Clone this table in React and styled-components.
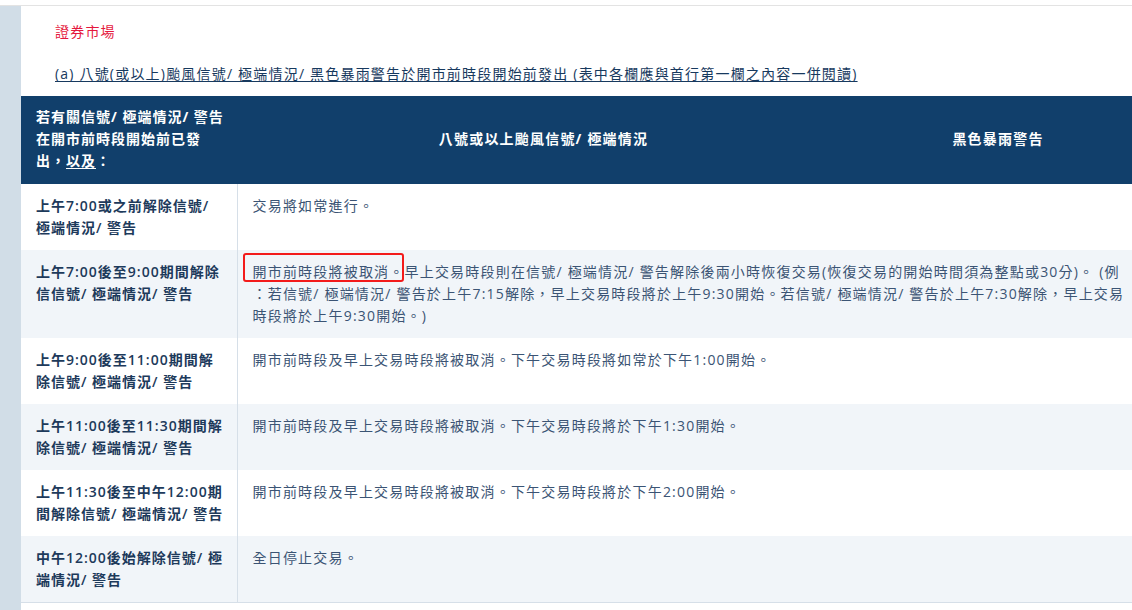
import React from 'react';
import styled, { createGlobalStyle } from 'styled-components';

const GlobalStyle = createGlobalStyle`
  * {
    margin: 0;
    padding: 0;
    box-sizing: border-box;
  }

  html, body {
    background: #ffffff;
    overflow: hidden;
    font-family: 'Open Sans', 'Noto Sans CJK TC', sans-serif;
    font-size: 14px;
    line-height: 22px;
    letter-spacing: 1.2px;
  }
`;

// Barra superior fina
const TopBar = styled.div`
  height: 6px;
  border-bottom: 1px solid #e3e3e3;
  width: 100%;
`;

const Layout = styled.div`
  display: flex;
  width: 1180px;
  min-height: 620px;
`;

// Faixa lateral cinza-azulada
const SideStrip = styled.aside`
  width: 21px;
  flex-shrink: 0;
  background-color: #d1dde7;
`;

const Content = styled.main`
  flex: 1;
  display: flex;
  flex-direction: column;
`;

const Intro = styled.div`
  padding: 15px 0 0 34px;
  display: flex;
  flex-direction: column;
  gap: 20px;
  margin-bottom: 11px;
`;

const SectionTitle = styled.h2`
  font-size: 14px;
  font-weight: 400;
  color: #e5173d;
  line-height: 22px;
`;

const SubTitle = styled.a`
  color: #17395e;
  text-decoration: underline;
  text-underline-offset: 2px;
  font-size: 14px;
`;

// Tabela
const Table = styled.table`
  width: 1125px;
  border-collapse: collapse;
  table-layout: fixed;
  border-bottom: 1px solid #d6dfe8;
`;

const Th = styled.th`
  background-color: #113f6b;
  color: #ffffff;
  font-weight: 700;
  padding: ${({ $left }) => ($left ? '10px 8px 12px 15px' : '10px 15px 12px')};
  letter-spacing: ${({ $left }) => ($left ? '1px' : '1.2px')};
  text-align: ${({ $left }) => ($left ? 'left' : 'center')};
  vertical-align: middle;
  width: ${({ $w }) => $w};
`;

const Row = styled.tr`
  background-color: ${({ $alt }) => ($alt ? '#f1f5f9' : '#ffffff')};
`;

const LabelCell = styled.td`
  padding: 11px 8px 11px 15px;
  vertical-align: top;
  color: #1d3a5b;
  font-weight: 600;
  letter-spacing: 1px;
  border-right: 1px solid #d6dfe8;
`;

const TextCell = styled.td`
  position: relative;
  padding: 11px 15px;
  vertical-align: top;
  color: #3b5474;
  line-break: anywhere;
`;

// Marca vermelha sobre o texto
const Highlight = styled.span`
  position: absolute;
  left: 5px;
  top: 3px;
  width: 161px;
  height: 29px;
  border: 2px solid #f31b1b;
  border-radius: 3px;
  pointer-events: none;
`;

const Under = styled.u`
  text-underline-offset: 2px;
`;

const rows = [
  {
    label: '上午7:00或之前解除信號/ 極端情況/ 警告',
    text: '交易將如常進行。',
  },
  {
    label: '上午7:00後至9:00期間解除信信號/ 極端情況/ 警告',
    text: '開市前時段將被取消。早上交易時段則在信號/ 極端情況/ 警告解除後兩小時恢復交易(恢復交易的開始時間須為整點或30分)。 (例：若信號/ 極端情況/ 警告於上午7:15解除，早上交易時段將於上午9:30開始。若信號/ 極端情況/ 警告於上午7:30解除，早上交易時段將於上午9:30開始。)',
    marked: true,
  },
  {
    label: '上午9:00後至11:00期間解除信號/ 極端情況/ 警告',
    text: '開市前時段及早上交易時段將被取消。下午交易時段將如常於下午1:00開始。',
  },
  {
    label: '上午11:00後至11:30期間解除信號/ 極端情況/ 警告',
    text: '開市前時段及早上交易時段將被取消。下午交易時段將於下午1:30開始。',
  },
  {
    label: '上午11:30後至中午12:00期間解除信號/ 極端情況/ 警告',
    text: '開市前時段及早上交易時段將被取消。下午交易時段將於下午2:00開始。',
  },
  {
    label: '中午12:00後始解除信號/ 極端情況/ 警告',
    text: '全日停止交易。',
  },
];

export default function App() {
  return (
    <>
      <GlobalStyle />
      <TopBar />
      <Layout>
        <SideStrip />
        <Content>
          <Intro>
            <SectionTitle>證券市場</SectionTitle>
            <div>
              <SubTitle href="#">
                (a) 八號(或以上)颱風信號/ 極端情況/ 黑色暴雨警告於開市前時段開始前發出 (表中各欄應與首行第一欄之內容一併閱讀)
              </SubTitle>
            </div>
          </Intro>
          <Table>
            <thead>
              <tr>
                <Th $left $w="216px">
                  若有關信號/ 極端情況/ 警告在開市前時段開始前已發出，<Under>以及</Under>：
                </Th>
                <Th $w="613px">八號或以上颱風信號/ 極端情況</Th>
                <Th>黑色暴雨警告</Th>
              </tr>
            </thead>
            <tbody>
              {rows.map((r, i) => (
                <Row key={i} $alt={i % 2 === 1}>
                  <LabelCell>{r.label}</LabelCell>
                  <TextCell colSpan={2}>
                    {r.marked && <Highlight />}
                    {r.text}
                  </TextCell>
                </Row>
              ))}
            </tbody>
          </Table>
        </Content>
      </Layout>
    </>
  );
}
